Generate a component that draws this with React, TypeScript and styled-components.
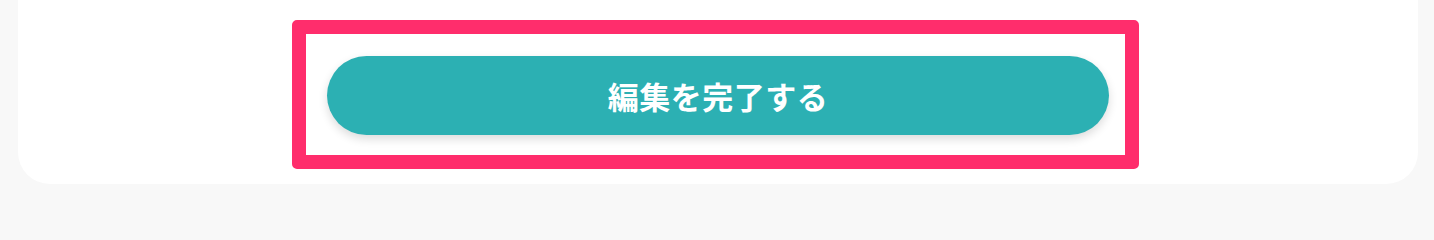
import styled, { createGlobalStyle } from 'styled-components';

const GlobalStyle = createGlobalStyle`
  html, body {
    margin: 0;
    padding: 0;
    background-color: #f8f8f8;
  }

  body {
    font-family: 'Noto Sans CJK JP', 'Noto Sans', sans-serif;
  }
`;

const Page = styled.div`
  height: 206px;
  box-sizing: border-box;
  padding: 0 16px 0 18px;
  overflow: hidden;
`;

const Card = styled.section`
  background-color: #ffffff;
  border-radius: 0 0 32px 32px;
  padding: 20px 0 15px;
  display: flex;
`;

const Highlight = styled.div`
  margin-left: 274px;
  width: 847px;
  height: 149px;
  box-sizing: border-box;
  border: 14px solid #ff2d6c;
  border-radius: 5px;
  display: flex;
  align-items: flex-start;
  padding: 22px 0 0 21px;
`;

const SubmitButton = styled.button`
  width: 782px;
  height: 79px;
  border: none;
  border-radius: 40px;
  background-color: #2cb0b3;
  color: #ffffff;
  font-family: 'Noto Sans CJK JP', 'Noto Sans', sans-serif;
  font-size: 31px;
  font-weight: 700;
  letter-spacing: 0.5px;
  box-shadow: 0 4px 10px rgba(0, 0, 0, 0.14);
  cursor: pointer;
  display: flex;
  align-items: center;
  justify-content: center;
  padding: 0;
`;

export default function App() {
  return (
    <>
      <GlobalStyle />
      <Page>
        <Card>
          <Highlight>
            <SubmitButton type="button">編集を完了する</SubmitButton>
          </Highlight>
        </Card>
      </Page>
    </>
  );
}
